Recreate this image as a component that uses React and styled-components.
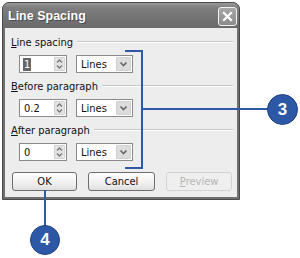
import React from 'react';
import styled, { createGlobalStyle } from 'styled-components';

const Global = createGlobalStyle`
  html, body { margin: 0; padding: 0; background: #fff; }
  body { font-family: "DejaVu Sans Condensed", "Liberation Sans", sans-serif; }
`;

const Page = styled.div`
  position: relative;
  width: 300px;
  height: 258px;
  padding: 2px 0 0 2px;
  box-sizing: border-box;
  overflow: hidden;
  background: #fff;
`;

const Dialog = styled.div`
  width: 238px;
  height: 198px;
  box-sizing: border-box;
  display: flex;
  flex-direction: column;
  border: 1px solid #4a4a4a;
  border-radius: 7px 7px 0 0;
  overflow: hidden;
  background: #707070;
`;

const TitleBar = styled.div`
  height: 25px;
  flex: none;
  display: flex;
  align-items: center;
  justify-content: space-between;
  padding: 0 2px 0 5px;
  background: linear-gradient(#9a9a9a 0%, #7e7e7e 18%, #737373 60%, #6a6a6a 100%);
`;

const Title = styled.div`
  font-family: "Liberation Sans", Arial, sans-serif;
  font-weight: bold;
  font-size: 12.5px;
  color: #fff;
  text-shadow: 1px 1px 0 #4a4a4a;
  padding-top: 1px;
`;

const CloseButton = styled.div`
  width: 19px;
  height: 19px;
  box-sizing: border-box;
  border: 1px solid #f2f2f2;
  border-radius: 3px;
  background: linear-gradient(#a8a8a8, #8a8a8a);
  display: flex;
  align-items: center;
  justify-content: center;
  margin-top: 2px;
`;

const Body = styled.div`
  flex: 1;
  margin: 0 2px 2px 2px;
  background: #ededed;
  display: flex;
  flex-direction: column;
  padding: 7px 4px 0 6px;
`;

const Section = styled.div`
  display: flex;
  flex-direction: column;
  gap: 6px;
  margin-bottom: 6px;
`;

const Header = styled.div`
  height: 14px;
  display: flex;
  align-items: center;
  font-size: 11px;
  color: #111;
`;

const Groove = styled.div`
  flex: 1;
  margin-left: 4px;
  border-top: 1px solid #c6c6c6;
  border-bottom: 1px solid #fff;
`;

const U = styled.span`
  text-decoration: underline;
  text-underline-offset: 1px;
`;

const InputRow = styled.div`
  height: 18px;
  display: flex;
  gap: 9px;
  padding-left: 8px;
`;

const Field = styled.div`
  width: ${p => p.$w}px;
  height: 18px;
  box-sizing: border-box;
  border: 1px solid #8a8a8a;
  background: #fff;
  display: flex;
  align-items: center;
  justify-content: space-between;
  padding: 0 1px 0 3px;
  font-size: 11px;
  color: #111;
`;

const Value = styled.span`
  line-height: 13px;
  padding: 0 1px;
  background: ${p => (p.$selected ? '#666' : 'transparent')};
  color: ${p => (p.$selected ? '#fff' : '#111')};
`;

const SideButton = styled.div`
  width: ${p => p.$w}px;
  height: 14px;
  box-sizing: border-box;
  background: ${p => p.$bg};
  border: 1px solid #d0d0d0;
  border-radius: 1px;
  display: flex;
  align-items: center;
  justify-content: center;
`;

const ButtonRow = styled.div`
  display: flex;
  gap: 11px;
  padding-left: 1px;
  margin-top: 5px;
`;

const Button = styled.div`
  width: ${p => p.$w}px;
  height: 19px;
  box-sizing: border-box;
  border: 1px solid ${p => (p.$disabled ? '#d2d2d2' : '#6e6e6e')};
  border-radius: 3px;
  background: ${p => (p.$disabled ? '#efefef' : 'linear-gradient(#ffffff, #ececec 70%, #dedede)')};
  color: ${p => (p.$disabled ? '#b5b5b5' : '#111')};
  font-size: 11px;
  display: flex;
  align-items: center;
  justify-content: center;
`;

const Bracket = styled.div`
  position: absolute;
  left: 125px;
  top: 50px;
  width: 18px;
  height: 119px;
  box-sizing: border-box;
  border: 2px solid #2d5aa8;
  border-left: none;
`;

const HLine = styled.div`
  position: absolute;
  left: 143px;
  top: 108px;
  width: 126px;
  height: 2px;
  background: #2d5aa8;
`;

const VLine = styled.div`
  position: absolute;
  left: 44px;
  top: 190px;
  width: 2px;
  height: 36px;
  background: #2d5aa8;
`;

const Callout = styled.div`
  position: absolute;
  left: ${p => p.$x}px;
  top: ${p => p.$y}px;
  width: ${p => p.$d}px;
  height: ${p => p.$d}px;
  box-sizing: border-box;
  border-radius: 50%;
  background: #2c58a6;
  border: 1px solid #1f4185;
  color: #fff;
  font-family: "Liberation Sans", Arial, sans-serif;
  font-weight: bold;
  font-size: 17px;
  display: flex;
  align-items: center;
  justify-content: center;
`;

const SpinArrows = () => (
  <svg width="9" height="12" viewBox="0 0 9 12">
    <path d="M2 4.5 L4.5 2 L7 4.5" fill="none" stroke="#777" strokeWidth="1.3" />
    <path d="M2 7.5 L4.5 10 L7 7.5" fill="none" stroke="#777" strokeWidth="1.3" />
  </svg>
);

const DropArrow = () => (
  <svg width="9" height="7" viewBox="0 0 9 7">
    <path d="M1.5 1.5 L4.5 4.5 L7.5 1.5" fill="none" stroke="#666" strokeWidth="1.6" />
  </svg>
);

const CloseX = () => (
  <svg width="11" height="11" viewBox="0 0 11 11">
    <path d="M2 2 L9 9 M9 2 L2 9" stroke="#fff" strokeWidth="2.2" strokeLinecap="square" />
  </svg>
);

const SpacingSection = ({ label, value, selected }) => (
  <Section>
    <Header>
      {label}
      <Groove />
    </Header>
    <InputRow>
      <Field $w={48}>
        <Value $selected={selected}>{value}</Value>
        <SideButton $w={11} $bg="#e4e4e4"><SpinArrows /></SideButton>
      </Field>
      <Field $w={57}>
        <Value>Lines</Value>
        <SideButton $w={15} $bg="#dcdcdc"><DropArrow /></SideButton>
      </Field>
    </InputRow>
  </Section>
);

export default function App() {
  return (
    <Page>
      <Global />
      <Dialog>
        <TitleBar>
          <Title>Line Spacing</Title>
          <CloseButton><CloseX /></CloseButton>
        </TitleBar>
        <Body>
          <SpacingSection label={<><U>L</U>ine spacing</>} value="1" selected />
          <SpacingSection label={<><U>B</U>efore paragraph</>} value="0.2" />
          <SpacingSection label={<><U>A</U>fter paragraph</>} value="0" />
          <ButtonRow>
            <Button $w={65}>OK</Button>
            <Button $w={67}>Cancel</Button>
            <Button $w={66} $disabled><U>P</U>review</Button>
          </ButtonRow>
        </Body>
      </Dialog>
      <Bracket />
      <HLine />
      <Callout $x={267} $y={94} $d={31}>3</Callout>
      <VLine />
      <Callout $x={30} $y={225} $d={30}>4</Callout>
    </Page>
  );
}
